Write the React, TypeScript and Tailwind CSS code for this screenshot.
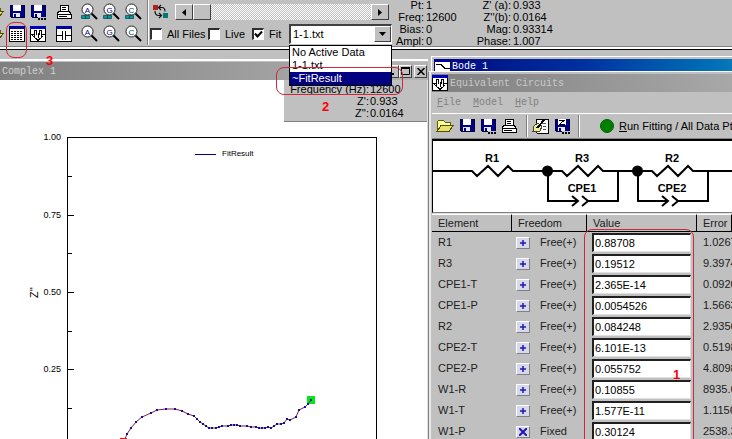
import type { ReactNode } from 'react';

const raised = 'border border-t-white border-l-white border-r-[#404040] border-b-[#404040] bg-[#c0c0c0]';

function Icon({ children, w = 16 }: { children: ReactNode; w?: number }) {
  return (
    <svg width={w} height="16" viewBox={`0 0 ${w} 16`} className="block shrink-0" shapeRendering="crispEdges" aria-hidden="true">
      {children}
    </svg>
  );
}

function FolderIcon() {
  return (
    <Icon w={18}>
      <path d="M1 13V4l2-2h4l2 2h5v3" fill="#ffff99" stroke="#606000" />
      <path d="M1 13.5l4-6h12l-4 6z" fill="#e8e070" stroke="#505000" />
    </Icon>
  );
}

function FloppyIcon({ dots = false, z = false }: { dots?: boolean; z?: boolean }) {
  return (
    <Icon>
      <path d="M1 1h14v12H2l-1-1z" fill="#00008b" stroke="#000040" />
      <rect x="4" y="1" width="8" height="6" fill="#fff" />
      <rect x="4" y="9" width="7" height="4" fill="#e8e8ff" />
      <rect x="5" y="10" width="2" height="3" fill="#00008b" />
      {z && <path d="M5 2.5h5L6 6h5" fill="none" stroke="#000" />}
      {dots && <path d="M8 13h8v3H8z" fill="#c0c0c0" />}
      {dots && <path d="M8 14h2v2H8zM11 14h2v2h-2zM14 14h2v2h-2z" fill="#000" />}
    </Icon>
  );
}

function PrinterIcon() {
  return (
    <Icon>
      <path d="M4 8V1h8v7z" fill="#fff" stroke="#000" />
      <path d="M6 3.5h4M6 5.5h4" stroke="#000" />
      <path d="M1 10l2-3h10l2 3v4H1z" fill="#fff" stroke="#000" />
      <path d="M1 10.5h14M3 12.5h8" stroke="#000" />
    </Icon>
  );
}

function LensIcon({ letter, color, tag = false }: { letter: string; color: string; tag?: boolean }) {
  return (
    <svg width="17" height="18" viewBox="0 0 17 18" className="block" aria-hidden="true">
      <path d="M10 10l6 6" stroke="#000" strokeWidth="2" />
      <circle cx="6.5" cy="6.5" r="5.5" fill="#fff" stroke="#222" strokeWidth="1" />
      <text x="6.5" y="9.5" textAnchor="middle" fontSize="8" fill={color} fontFamily="Liberation Sans, sans-serif">{letter}</text>
      {tag && <path d="M.5 12.5h4v3h-4zM4.5 12.5h4v3h-4z" fill="#009a9a" stroke="#045" strokeWidth=".7" />}
    </svg>
  );
}

function GridIcon() {
  return (
    <Icon>
      <rect x=".5" y=".5" width="15" height="15" fill="#fff" stroke="#000" />
      <rect x="0" y="0" width="16" height="3" fill="#0000a0" />
      <path d="M2 5.5h12M2 7.5h12M2 9.5h12M2 11.5h12M2 13.5h12" stroke="#000" strokeDasharray="2 1" />
    </Icon>
  );
}

function CircuitIcon() {
  return (
    <Icon>
      <rect x=".5" y=".5" width="15" height="15" fill="#fff" stroke="#000" />
      <rect x="0" y="0" width="16" height="3" fill="#0000c0" />
      <path d="M1 8.5h3M4.500 11V4.500h2V9M9.500 9V4.500h2V11M12 8.500h3M2.500 9.500l5.500 5 5.500-5M8 7v5" fill="none" stroke="#000" />
    </Icon>
  );
}

function SplitIcon() {
  return (
    <Icon>
      <rect x=".5" y=".5" width="15" height="15" fill="#fff" stroke="#000" />
      <rect x="0" y="0" width="16" height="3" fill="#0000a0" />
      <path d="M1 9.5h5M10 9.5h5" stroke="#000" />
      <path d="M6.5 5v9M9.5 5v9" stroke="#000" />
    </Icon>
  );
}

function SwapIcon() {
  return (
    <svg width="17" height="16" viewBox="0 0 17 16" className="block" aria-hidden="true">
      <rect x="1" y="1" width="5" height="5" fill="#b02020" />
      <rect x="11" y="9" width="5" height="5" fill="#007878" />
      <path d="M7 3.5h3q3 0 3 4M9 1L6.5 3.5 9 6M3 7q0 4 3 4.500h3M7 9l2.500 2.500L7 14" fill="none" stroke="#111" strokeWidth="1.2" />
    </svg>
  );
}

function NoteIcon() {
  return (
    <Icon w={18}>
      <path d="M4 1h12v14H5z" fill="#fff" stroke="#000" />
      <path d="M10 5.5h4M11 8.5h3M11 11.5h3" stroke="#555" />
      <path d="M1 13l1-5 4-3 4 3-2 5z" fill="#f0f090" stroke="#444" />
      <path d="M5 10l8-9" stroke="#000" strokeWidth="2" />
    </Icon>
  );
}

function ToolButton({ label, children }: { label: string; children: ReactNode }) {
  return (
    <button type="button" aria-label={label} className="flex h-[22px] items-center">
      {children}
    </button>
  );
}

function CheckOption({ label, checked = false, className }: { label: string; checked?: boolean; className: string }) {
  return (
    <label className={`flex items-center gap-[5px] whitespace-nowrap ${className}`}>
      <span className="relative block size-3">
        <input type="checkbox" defaultChecked={checked} className="peer block size-3 appearance-none border border-t-2 border-l-2 border-t-[#303030] border-l-[#303030] border-r-white border-b-white bg-white" />
        <svg viewBox="0 0 12 12" className="pointer-events-none absolute inset-0 hidden size-3 peer-checked:block" aria-hidden="true">
          <path d="M3 5.5l2.500 3L10 3.5" fill="none" stroke="#000" strokeWidth="2" />
        </svg>
      </span>
      {label}
    </label>
  );
}

const lenses = [
  { letter: 'A', color: '#000080' },
  { letter: 'G', color: '#000080' },
  { letter: 'C', color: '#004060' },
];

const readings = [
  ['Pt:', '1', "Z' (a):", '0.933'],
  ['Freq:', '12600', "Z''(b):", '0.0164'],
  ['Bias:', '0', 'Mag:', '0.93314'],
  ['Ampl:', '0', 'Phase:', '1.007'],
];

function MainToolbar() {
  return (
    <header className="relative z-10 flex h-[50px] shrink-0 border-b border-black bg-[#c0c0c0] shadow-[inset_0_-2px_0_#fff,inset_0_-3px_0_#808080]">
      <div className="grid shrink-0 grid-cols-[9px_21px_26px_25px_22px_22px_22px] content-start pt-px">
        <ToolButton label="Open"><span className="flex w-1 justify-end overflow-hidden"><FolderIcon /></span></ToolButton>
        <ToolButton label="Save"><FloppyIcon /></ToolButton>
        <ToolButton label="Save as"><FloppyIcon dots /></ToolButton>
        <ToolButton label="Print"><PrinterIcon /></ToolButton>
        {lenses.map((l) => (
          <ToolButton key={l.letter} label={`Zoom all ${l.letter}`}><LensIcon {...l} tag /></ToolButton>
        ))}
        <ToolButton label="Open data"><span className="flex w-1 justify-end overflow-hidden"><FolderIcon /></span></ToolButton>
        <ToolButton label="Data table"><GridIcon /></ToolButton>
        <ToolButton label="Equivalent circuits"><CircuitIcon /></ToolButton>
        <ToolButton label="Instant fit"><SplitIcon /></ToolButton>
        {lenses.map((l) => (
          <ToolButton key={l.letter} label={`Zoom ${l.letter}`}><LensIcon {...l} /></ToolButton>
        ))}
      </div>
      <div className="mb-1 w-0.5 shrink-0 border-r border-l border-r-white border-l-[#808080]" />
      <div className="flex w-[243px] shrink-0 flex-col pt-1">
        <div className="flex pl-[3px]">
          <button type="button" aria-label="Swap"><SwapIcon /></button>
          <div className="ml-1.5 flex h-4 w-[214px] bg-[repeating-conic-gradient(#fff_0_25%,#c0c0c0_0_50%)] bg-[length:2px_2px]">
            <button type="button" aria-label="Previous point" className={`flex w-[18px] items-center justify-center ${raised}`}>
              <svg width="4" height="7" aria-hidden="true"><path d="M4 0v7L0 3.5z" /></svg>
            </button>
            <button type="button" aria-label="Point position" className={`w-[18px] ${raised}`} />
            <button type="button" aria-label="Next point" className={`ml-auto flex w-[18px] items-center justify-center ${raised}`}>
              <svg width="4" height="7" aria-hidden="true"><path d="M0 0v7l4-3.5z" /></svg>
            </button>
          </div>
        </div>
        <div className="mt-1 flex h-5 items-center pl-px">
          <CheckOption label="All Files" className="w-[58px]" />
          <CheckOption label="Live" className="w-11" />
          <CheckOption label="Fit" checked className="w-[37px]" />
          <div className="relative h-5 flex-1">
            <select aria-label="Active data" defaultValue="1-1.txt" className="block h-5 w-full appearance-none border border-t-2 border-l-2 border-t-[#404040] border-l-[#404040] border-r-white border-b-white bg-white pl-0.5">
              <option>No Active Data</option>
              <option>1-1.txt</option>
              <option>~FitResult</option>
            </select>
            <span className={`pointer-events-none absolute top-0.5 right-px flex h-4 w-[17px] items-center justify-center ${raised}`}>
              <svg width="7" height="4" aria-hidden="true"><path d="M0 0h7L3.5 4z" /></svg>
            </span>
            <ul role="listbox" aria-label="Data files" className="absolute top-[21px] left-0 w-[103px] border border-black bg-white leading-[13px]">
              <li role="option" aria-selected="false" className="pl-0.5">No Active Data</li>
              <li role="option" aria-selected="false" className="pl-0.5">1-1.txt</li>
              <li role="option" aria-selected="true" className="bg-[#000080] pl-0.5 text-white">~FitResult</li>
            </ul>
          </div>
        </div>
      </div>
      <dl className="-mt-px grid grid-cols-[32px_36px_47px_auto] content-start gap-x-0.5 leading-3 whitespace-nowrap">
        {readings.map(([a, b, c, d]) => (
          <div key={a} className="contents">
            <dt className="text-right">{a}</dt>
            <dd>{b}</dd>
            <dt className="text-right">{c}</dt>
            <dd>{d}</dd>
          </div>
        ))}
      </dl>
    </header>
  );
}

const curve = [
  [125, 359], [127, 354], [131, 348], [136, 342], [142, 337], [151, 333], [157, 330], [166, 329], [175, 329],
  [182, 331], [188, 334], [194, 336], [197, 339], [200, 342], [203, 344], [206, 346], [209, 348], [212, 348],
  [216, 348], [219, 347], [222, 346], [228, 346], [231, 345], [234, 345], [237, 345], [240, 346], [247, 346],
  [251, 347], [256, 347], [259, 348], [262, 348], [265, 348], [268, 347], [271, 348], [274, 346], [277, 344],
  [281, 344], [284, 343], [287, 339], [290, 340], [296, 337], [299, 330], [305, 327], [308, 324], [311, 320],
];

function ComplexPlot() {
  return (
    <svg width="426" height="400" viewBox="0 0 426 400" className="block" fontFamily="Liberation Sans, sans-serif" role="img" aria-label="Complex plane plot">
      <g shapeRendering="crispEdges" fill="none" stroke="#000">
        <path d="M67.5 400V57.5h309V400" />
        <path d="M67 135.5h7M67 212.5h7M67 289.5h7M67 96.5h5M67 173.5h5M67 251.5h5M67 328.5h5" />
        <path d="M195 74.5h21" stroke="#000090" />
      </g>
      <g fontSize="9" textAnchor="end">
        <text x="61" y="60">1.00</text>
        <text x="61" y="138">0.75</text>
        <text x="61" y="215">0.50</text>
        <text x="61" y="292">0.25</text>
      </g>
      <text transform="translate(38 218) rotate(-90)" fontSize="11">Z''</text>
      <text x="222" y="76" fontSize="8">FitResult</text>
      <rect x="307" y="316" width="8" height="8" fill="#00e81c" />
      <polyline points={curve.map((p) => p.join(',')).join(' ')} fill="none" stroke="#802040" />
      <g fill="#1010a0" shapeRendering="crispEdges">
        {curve.map(([x, y]) => <rect key={x} x={x - 1} y={y - 1} width="2" height="2" />)}
      </g>
      <rect x="120" y="358" width="7" height="7" fill="#f01020" />
    </svg>
  );
}

function ComplexWindow() {
  const control = `flex h-[13px] w-[13px] items-center justify-center ${raised}`;
  return (
    <section className="mt-[9px] flex w-[428px] shrink-0 flex-col border-t-2 border-white">
      <div className="flex h-[19px] shrink-0 items-center border-t border-[#c0c0c0] bg-linear-to-r from-[#808080] to-[#b4b4b4] pr-px pl-0.5">
        <h2 className="flex-1 font-['Liberation_Mono',monospace] text-[10px] text-[#d0d0d0]">Complex 1</h2>
        <button type="button" aria-label="Minimize" className={control}><svg width="7" height="7"><path d="M0 6h5" stroke="#000" strokeWidth="2" /></svg></button>
        <button type="button" aria-label="Maximize" className={control}><svg width="9" height="8"><path d="M.5 1h8v6.5h-8z" fill="none" stroke="#000" /><path d="M0 1h9" stroke="#000" strokeWidth="2" /></svg></button>
        <button type="button" aria-label="Close" className={`ml-0.5 ${control}`}><svg width="8" height="7"><path d="M.5 0l7 7M7.5 0l-7 7" stroke="#000" strokeWidth="1.5" /></svg></button>
      </div>
      <div className="relative min-h-0 flex-1 overflow-hidden border-r border-[#dfdfdf] bg-white">
        <ComplexPlot />
        <dl className="absolute top-0 right-0 grid w-[143px] grid-cols-[85px_auto] gap-x-px border-b border-[#808080] bg-[#c0c0c0] pt-[3px] pb-0.5 leading-3 whitespace-nowrap">
          <dt className="flex justify-end">Frequency (Hz):</dt><dd>12600</dd>
          <dt className="text-right">Z':</dt><dd>0.933</dd>
          <dt className="text-right">Z'':</dt><dd>0.0164</dd>
        </dl>
      </div>
    </section>
  );
}

function CircuitDiagram() {
  return (
    <svg width="300" height="71" viewBox="432 141 300 71" className="block" role="img" aria-label="Circuit: R1, R3 parallel CPE1, R2 parallel CPE2">
      <g fill="none" stroke="#000" strokeWidth="2">
        <path d="M432 171h39l5 5 11-10 10 10 10-10 5 5h49l5 5 11-10 10 10 10-10 5 5h49l5 5 11-10 10 10 10-10 5 5h41" />
        <path d="M547 171v30h30M587 201h30v-30M637 171v30h30M677 201h30v-30" />
        <path d="M571 196l6 5-6 5M581 196l6 5-6 5M661 196l6 5-6 5M671 196l6 5-6 5" />
      </g>
      <circle cx="546.5" cy="171" r="5.5" />
      <circle cx="636.5" cy="171" r="5.5" />
      <g fontFamily="Liberation Sans, sans-serif" fontSize="11" fontWeight="bold" textAnchor="middle">
        <text x="491" y="162">R1</text>
        <text x="581" y="162">R3</text>
        <text x="671" y="162">R2</text>
        <text x="581" y="192">CPE1</text>
        <text x="671" y="192">CPE2</text>
      </g>
    </svg>
  );
}

const elements = [
  { name: 'R1', value: '0.88708', error: '1.0267' },
  { name: 'R3', value: '0.19512', error: '9.3974' },
  { name: 'CPE1-T', value: '2.365E-14', error: '0.0920' },
  { name: 'CPE1-P', value: '0.0054526', error: '1.5663' },
  { name: 'R2', value: '0.084248', error: '2.9356' },
  { name: 'CPE2-T', value: '6.101E-13', error: '0.5198' },
  { name: 'CPE2-P', value: '0.055752', error: '4.8098' },
  { name: 'W1-R', value: '0.10855', error: '8935.6' },
  { name: 'W1-T', value: '1.577E-11', error: '1.1156' },
  { name: 'W1-P', value: '0.30124', error: '2538.3', fixed: true },
];

function ElementTable() {
  const th = 'h-[18px] border-r border-b border-t border-t-white border-r-black border-b-black p-0 pl-1.5 text-left font-normal';
  return (
    <table className="w-full table-fixed border-separate border-spacing-0 text-[#202020]">
      <colgroup>
        <col className="w-20" />
        <col className="w-[75px]" />
        <col className="w-[110px]" />
        <col />
      </colgroup>
      <thead>
        <tr>
          <th className={th}>Element</th>
          <th className={th}>Freedom</th>
          <th className={th}>Value</th>
          <th className={th}>Error</th>
        </tr>
      </thead>
      <tbody>
        {elements.map((e) => (
          <tr key={e.name}>
            <td className="h-[21px] p-0 pl-1.5">{e.name}</td>
            <td className="p-0 pl-1">
              <span className="flex items-center gap-2.5">
                <button type="button" aria-label={`Freedom of ${e.name}`} className="flex h-3 w-3.5 items-center justify-center border border-t-white border-l-white border-r-[#808080] border-b-[#808080] bg-[#d8d8ec]">
                  <svg width="8" height="8" viewBox="0 0 8 8" aria-hidden="true">
                    <path d={e.fixed ? 'M0 0l8 8M8 0L0 8' : 'M1 4h6M4 1v6'} stroke="#2018b0" strokeWidth={e.fixed ? 2 : 1.5} />
                  </svg>
                </button>
                {e.fixed ? 'Fixed' : 'Free(+)'}
              </span>
            </td>
            <td className="p-0 pr-1.5 pl-[5px]">
              <input aria-label={`Value of ${e.name}`} defaultValue={e.value} className="block h-[19px] w-full border-t-2 border-r border-b border-l-2 border-t-[#202020] border-l-[#202020] border-r-[#e0e0e0] border-b-[#e0e0e0] bg-white pl-px text-black" />
            </td>
            <td className="overflow-hidden p-0 pl-1.5 whitespace-nowrap">{e.error}</td>
          </tr>
        ))}
      </tbody>
    </table>
  );
}

function Separator() {
  return <span className="h-[22px] w-0.5 border-r border-l border-r-white border-l-[#808080]" />;
}

function CircuitsWindow() {
  return (
    <section className="flex min-h-0 flex-1 flex-col overflow-hidden border-t border-l border-t-white border-l-[#808080] bg-[#c0c0c0]">
      <div className="flex min-h-0 flex-1 flex-col border-l-2 border-[#e8e8e8] pt-0.5 pl-px">
        <div className="flex h-[18px] shrink-0 items-center gap-0.5 bg-linear-to-r from-[#808080] to-[#a8a8a8]">
          <CircuitIcon />
          <h2 className="font-['Liberation_Mono',monospace] text-[10px] text-[#c8c8c8]">Equivalent Circuits</h2>
        </div>
        <nav className="flex h-[21px] shrink-0 items-center gap-3 pl-[5px] font-['Liberation_Mono',monospace] text-[10px] text-[#808080]">
          <button type="button"><u>F</u>ile</button>
          <button type="button"><u>M</u>odel</button>
          <button type="button"><u>H</u>elp</button>
        </nav>
        <div className="flex h-[26px] shrink-0 items-center border-t border-b border-t-white border-b-[#808080] pl-1 whitespace-nowrap">
          <div className="flex w-[90px] shrink-0 items-center gap-[5px]">
            <ToolButton label="Open model"><FolderIcon /></ToolButton>
            <ToolButton label="Save model"><FloppyIcon /></ToolButton>
            <ToolButton label="Save model as"><FloppyIcon dots /></ToolButton>
            <ToolButton label="Print model"><PrinterIcon /></ToolButton>
          </div>
          <Separator />
          <div className="flex w-[50px] shrink-0 items-center gap-1 pl-1">
            <ToolButton label="Edit notes"><NoteIcon /></ToolButton>
            <ToolButton label="Save fit"><FloppyIcon dots z /></ToolButton>
          </div>
          <Separator />
          <button type="button" className="ml-5 flex items-center gap-[5px]">
            <span className="size-3.5 rounded-full border border-[#006000] bg-[#008000]" />
            <span><u>R</u>un Fitting / All Data Pts</span>
          </button>
        </div>
        <div className="h-[74px] shrink-0 overflow-hidden border-t-2 border-b border-l border-t-black border-b-[#808080] border-l-black bg-white">
          <CircuitDiagram />
        </div>
        <div className="min-h-0 flex-1 overflow-hidden border-t border-[#dfdfdf]">
          <ElementTable />
        </div>
      </div>
    </section>
  );
}

function BodeTitle() {
  return (
    <section className="ml-[3px] h-[15px] shrink-0 overflow-hidden border-t border-l border-white pt-0.5 pl-0.5">
      <div className="flex h-4 gap-0.5 bg-linear-to-r from-[#000080] via-[#0030a0] to-[#0878b8]">
        <Icon>
          <rect x="1" y="1" width="15" height="15" fill="#fff" />
          <rect x="1" y="1" width="15" height="2" fill="#0000a0" />
          <path d="M2 5.5h5l4 4h5" fill="none" stroke="#000" />
        </Icon>
        <h2 className="pt-0.5 font-['Liberation_Mono',monospace] text-[10px] leading-3 text-white">Bode 1</h2>
      </div>
    </section>
  );
}

function Annotations() {
  const ring = 'absolute border border-[#d02838]';
  const digit = 'absolute text-[13px] leading-4 font-bold text-[#ff0000]';
  return (
    <div className="pointer-events-none absolute inset-0 z-20 overflow-hidden">
      <span className={`${ring} top-[22px] left-1.5 h-9 w-[21px] rounded-lg`} />
      <span className={`${ring} top-[67px] left-[276px] h-7 w-[127px] rounded-lg`} />
      <span className={`${ring} top-[229px] left-[584px] h-[230px] w-[110px] rounded-lg`} />
      <span className={`${digit} top-[53px] left-[46px]`}>3</span>
      <span className={`${digit} top-[99px] left-[322px]`}>2</span>
      <span className={`${digit} top-[367px] left-[673px]`}>1</span>
    </div>
  );
}

export default function App() {
  return (
    <div className="relative flex h-screen flex-col overflow-hidden bg-[#c0c0c0] font-['Liberation_Sans',Arial,sans-serif] text-[11px] leading-[13px] text-black">
      <MainToolbar />
      <main className="flex min-h-0 flex-1">
        <ComplexWindow />
        <div className="flex min-w-0 flex-1 flex-col pt-1.5">
          <BodeTitle />
          <CircuitsWindow />
        </div>
      </main>
      <Annotations />
    </div>
  );
}
